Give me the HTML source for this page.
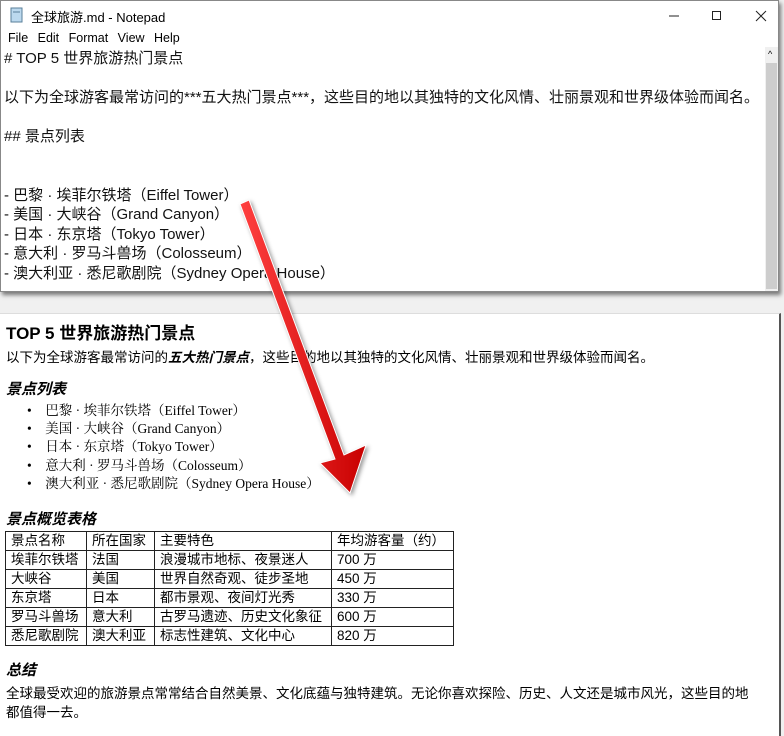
<!DOCTYPE html>
<html><head><meta charset="utf-8"><style>
body{margin:0;width:784px;height:735px;background:#f0f0f0;position:relative;overflow:hidden;font-family:"Liberation Sans","Noto Sans CJK SC",sans-serif;}
.np{position:absolute;left:0;top:0;width:777px;height:290px;background:#fff;border:1px solid #888;box-shadow:2px 3px 4px rgba(0,0,0,.5);}
.title{position:absolute;left:30px;top:6px;font-size:13px;color:#000}
.menu{position:absolute;left:7px;top:30px;font-size:12.5px;word-spacing:6px}
.txt{position:absolute;left:3px;top:48px;font-size:15px;line-height:19.5px;color:#111;white-space:pre}
.sb{position:absolute;left:764px;top:46px;width:13px;height:244px;background:#f0f0f0}
.pv{position:absolute;left:0;top:313px;width:779px;height:422px;background:#fff;border-right:2px solid #555;border-top:1px solid #ddd}
.pv div{position:absolute;left:6px;white-space:nowrap}
table{position:absolute;left:5px;top:217px;border-collapse:collapse;font-size:13.5px}
td{border:1px solid #222;padding:0 5px;height:18px;line-height:18px}
</style></head><body>
<div class="np">
<svg style="position:absolute;left:9px;top:6px" width="14" height="16"><rect x="1" y="1" width="11" height="14" fill="#bcd9ee" stroke="#5a7f9a"/><line x1="3" y1="5" x2="10" y2="5" stroke="#5a7f9a"/></svg>
<div class="title">全球旅游.md - Notepad</div>
<svg style="position:absolute;left:668px;top:8px" width="110" height="14" stroke="#222" fill="none"><line x1="0" y1="7" x2="10" y2="7"/><rect x="43.5" y="2.5" width="8" height="8"/><path d="M87 2L97 12M97 2L87 12"/></svg>
<div class="menu">File Edit Format View Help</div>
<div class="txt"># TOP 5 世界旅游热门景点

以下为全球游客最常访问的***五大热门景点***，这些目的地以其独特的文化风情、壮丽景观和世界级体验而闻名。

## 景点列表


- 巴黎 · 埃菲尔铁塔（Eiffel Tower）
- 美国 · 大峡谷（Grand Canyon）
- 日本 · 东京塔（Tokyo Tower）
- 意大利 · 罗马斗兽场（Colosseum）
- 澳大利亚 · 悉尼歌剧院（Sydney Opera House）</div>
<div class="sb"><div style="position:absolute;top:16px;left:1px;width:11px;height:226px;background:#cdcdcd"></div><div style="position:absolute;top:2px;left:3px;font-size:9px">^</div></div>
</div>
<div class="pv">
<div style="top:5px;font-size:17px;font-weight:bold">TOP 5 世界旅游热门景点</div>
<div style="top:32px;font-size:13.5px">以下为全球游客最常访问的<b><i>五大热门景点</i></b>，这些目的地以其独特的文化风情、壮丽景观和世界级体验而闻名。</div>
<div style="top:64px;font-size:15px;font-weight:bold;font-style:italic">景点列表</div>
<div style="top:88px;left:27px;font-family:'Liberation Serif','Noto Serif CJK SC',serif;font-size:13.5px;line-height:18.2px">•&nbsp;&nbsp;&nbsp;&nbsp;巴黎 · 埃菲尔铁塔（Eiffel Tower）<br>•&nbsp;&nbsp;&nbsp;&nbsp;美国 · 大峡谷（Grand Canyon）<br>•&nbsp;&nbsp;&nbsp;&nbsp;日本 · 东京塔（Tokyo Tower）<br>•&nbsp;&nbsp;&nbsp;&nbsp;意大利 · 罗马斗兽场（Colosseum）<br>•&nbsp;&nbsp;&nbsp;&nbsp;澳大利亚 · 悉尼歌剧院（Sydney Opera House）</div>
<div style="top:194px;font-size:15px;font-weight:bold;font-style:italic">景点概览表格</div>
<table>
<tr><td style="width:70px">景点名称</td><td style="width:57px">所在国家</td><td style="width:166px">主要特色</td><td style="width:111px">年均游客量（约）</td></tr>
<tr><td>埃菲尔铁塔</td><td>法国</td><td>浪漫城市地标、夜景迷人</td><td>700 万</td></tr>
<tr><td>大峡谷</td><td>美国</td><td>世界自然奇观、徒步圣地</td><td>450 万</td></tr>
<tr><td>东京塔</td><td>日本</td><td>都市景观、夜间灯光秀</td><td>330 万</td></tr>
<tr><td>罗马斗兽场</td><td>意大利</td><td>古罗马遗迹、历史文化象征</td><td>600 万</td></tr>
<tr><td>悉尼歌剧院</td><td>澳大利亚</td><td>标志性建筑、文化中心</td><td>820 万</td></tr>
</table>
<div style="top:345px;font-size:15px;font-weight:bold;font-style:italic">总结</div>
<div style="top:370px;font-size:13.5px;line-height:19px;white-space:normal;width:746px">全球最受欢迎的旅游景点常常结合自然美景、文化底蕴与独特建筑。无论你喜欢探险、历史、人文还是城市风光，这些目的地都值得一去。</div>
</div>
<svg style="position:absolute;left:0;top:0" width="784" height="735">
<defs><linearGradient id="g" x1="0" x2="1"><stop offset="0" stop-color="#ff4040"/><stop offset="1" stop-color="#c80000"/></linearGradient></defs>
<polygon points="240,204 249,200 344,455 366,445 350,493 320,463 335,459" fill="url(#g)" stroke="#fff" stroke-width="1" style="filter:drop-shadow(2px 2px 2px rgba(0,0,0,.4))"/>
</svg>
</body></html>
